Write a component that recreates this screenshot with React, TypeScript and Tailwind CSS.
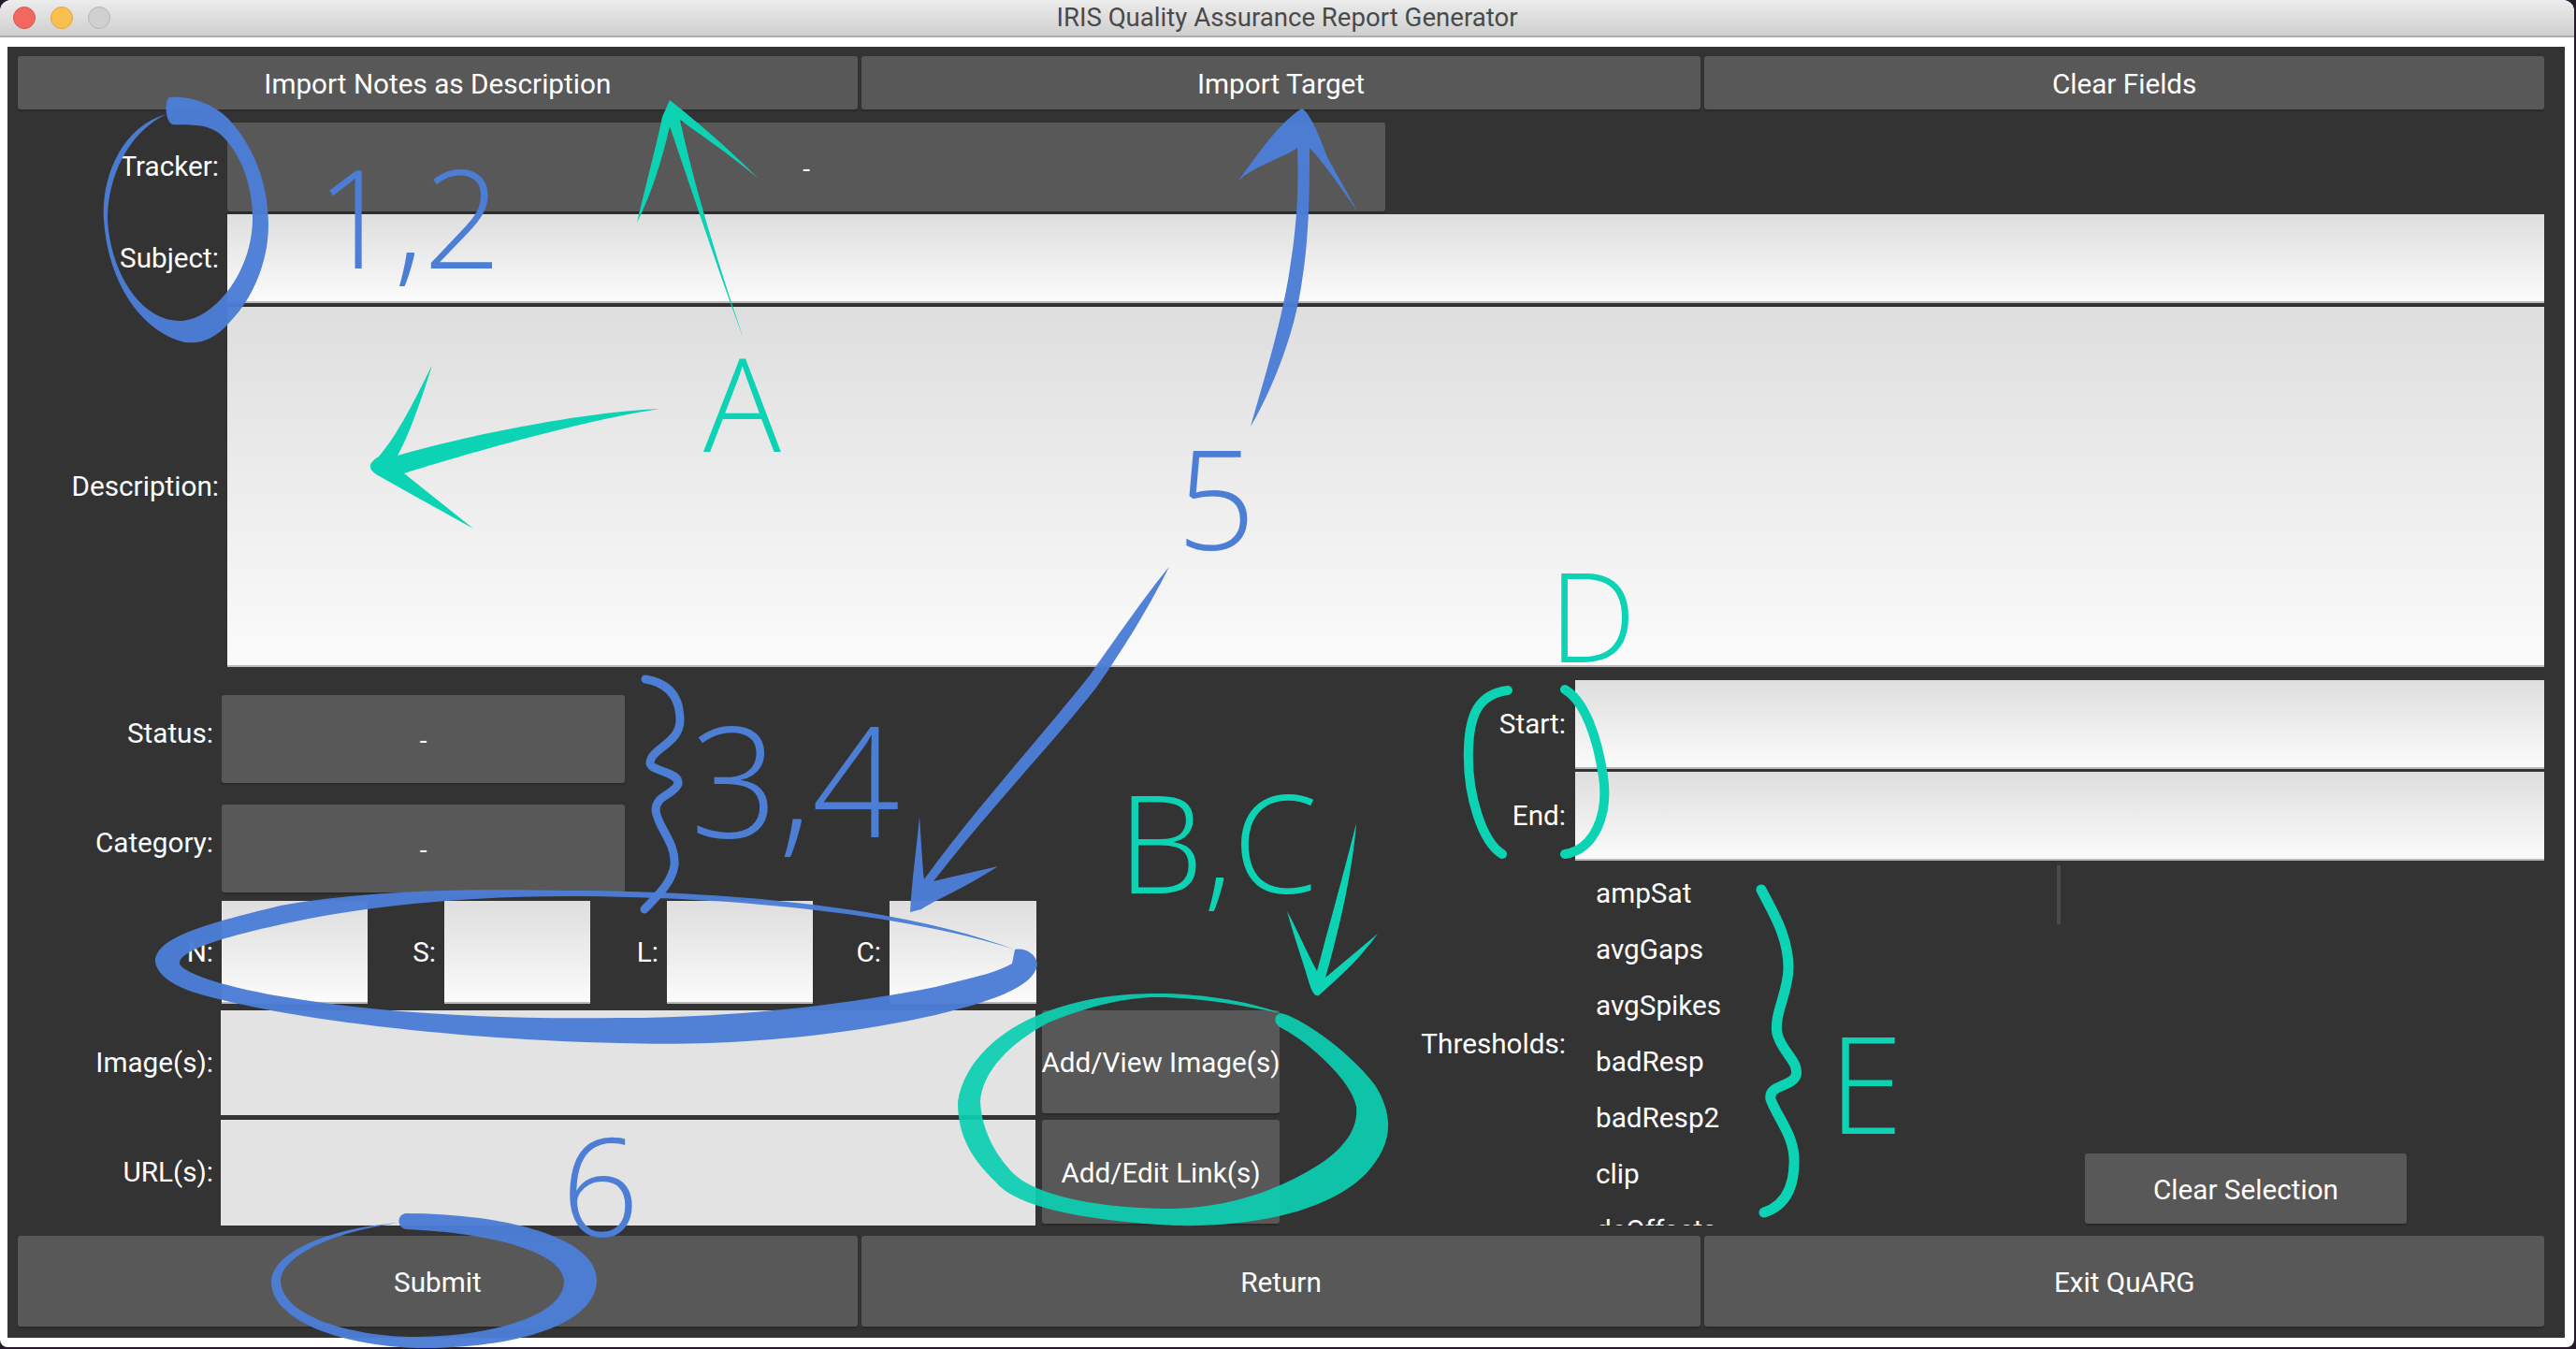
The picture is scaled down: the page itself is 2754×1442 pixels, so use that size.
import React from 'react';

const font = { fontFamily: 'Roboto, "Liberation Sans", sans-serif' };

const Button: React.FC<{ label: string; className?: string }> = ({ label, className = '' }) => (
    <button className={`bg-[#585858] rounded-[3px] shadow-[0_2px_1px_#2a2a2a] text-white text-[29.7px] pt-[3px] flex items-center justify-center whitespace-nowrap ${className}`}>
        {label}
    </button>
);

const Combo: React.FC<{ className?: string }> = ({ className = '' }) => (
    <div className={`bg-[#585858] rounded-[3px] shadow-[0_2px_1px_#2a2a2a] text-white text-[28px] flex items-center justify-center ${className}`}>
        <span className="pt-1">-</span>
    </div>
);

const Label: React.FC<{ text: string; className?: string }> = ({ text, className = '' }) => (
    <div className={`text-white text-[29.7px] text-right flex items-center justify-end shrink-0 ${className}`}>{text}</div>
);

const inputClass = 'bg-linear-to-b from-[#dedede] to-[#fbfbfb] border-b-2 border-[#b9b9b9]';

const THRESHOLDS = ['ampSat', 'avgGaps', 'avgSpikes', 'badResp', 'badResp2', 'clip', 'dcOffsets'];

// hand drawn marks laid over the finished window
const Annotations = () => (
    <svg className="absolute left-0 top-0 pointer-events-none" width={2754} height={1442} viewBox="0 0 2754 1442">
        <g fill="#4c7ed6" fillOpacity={0.97}>
            {/* ring around tracker, subject */}
            <path d="M181 104 C205 102 230 112 245 128 C270 155 287 195 287 240 C287 280 270 320 245 345 C230 362 215 368 198 366 C150 355 115 300 111 235 C108 190 130 135 178 122 C136 142 115 190 115 235 C118 290 150 345 195 343 C230 340 270 290 270 233 C270 195 255 160 235 143 C218 130 200 135 184 133 C176 128 176 108 181 104 Z" />
            {/* arrow to import target */}
            <path d="M1392 116 C1402 122 1412 150 1420 170 L1452 227 C1430 195 1412 170 1400 158 C1400 200 1400 250 1392 300 C1384 360 1358 420 1337 456 C1350 410 1372 340 1380 280 C1388 230 1388 190 1387 158 C1370 170 1345 175 1324 193 C1345 165 1368 130 1392 116 Z" />
            {/* arrow to the C field */}
            <path d="M1250 606 C1225 655 1200 695 1172 735 C1125 795 1055 868 998 942 L1067 926 C1030 950 1000 962 985 972 L973 975 C975 940 980 905 983 873 C985 900 986 925 988 940 C1040 868 1115 785 1165 722 C1198 675 1228 632 1250 606 Z" />
            {/* ring around N, S, L, C */}
            <path d="M1085 1015 C1100 1012 1112 1025 1108 1035 C1100 1060 1040 1075 1000 1085 C880 1112 760 1118 663 1115 C500 1112 300 1090 205 1060 C175 1050 165 1035 166 1025 C170 1000 230 985 300 968 C400 950 520 950 606 952 C750 952 950 965 1085 1015 C950 972 750 958 606 958 C520 958 420 965 330 982 C250 998 190 1015 192 1030 C195 1040 240 1055 300 1065 C400 1082 520 1090 663 1088 C780 1088 900 1075 1000 1055 C1040 1045 1065 1040 1082 1030 Z" />
            {/* ring around submit */}
            <path d="M434 1297 C530 1297 640 1320 638 1370 C635 1420 540 1442 446 1441 C360 1438 290 1410 290 1370 C292 1335 360 1312 427 1307 C365 1315 300 1340 300 1370 C302 1405 370 1429 446 1429 C530 1428 603 1405 603 1370 C603 1340 530 1318 434 1314 C424 1312 424 1298 434 1297 Z" />
        </g>
        <g fill="none" stroke="#4c7ed6" strokeLinecap="round" strokeLinejoin="round">
            <path strokeWidth={9} d="M690 726 C715 730 727 745 727 770 C727 795 695 800 695 816 C697 825 727 825 725 838 C720 850 701 850 701 866 C703 885 723 900 721 925 C718 945 700 960 689 972" />
        </g>
        <g fill="#0dd3b5">
            {/* arrow to import notes */}
            <path d="M716 107 C730 118 770 150 811 191 C780 165 750 145 727 128 C740 190 770 290 795 362 C775 310 745 220 716 135 C707 175 695 210 681 238 C690 200 703 150 708 125 Z" />
            {/* arrow to description */}
            <path d="M462 390 C450 430 435 470 425 487 C480 470 620 440 706 437 C620 450 500 485 432 506 L506 565 C470 545 425 520 402 507 C392 500 395 494 405 488 C425 465 445 425 462 390 Z" />
            {/* arrow to the add buttons */}
            <path d="M1450 880 C1447 920 1437 975 1417 1045 L1473 998 C1450 1030 1425 1050 1410 1064 C1405 1066 1402 1058 1400 1052 C1392 1025 1383 1000 1376 974 C1385 990 1398 1020 1408 1038 C1425 975 1440 920 1450 880 Z" />
        </g>
        <g fill="#0dcfb2" fillOpacity={0.93}>
            {/* ring around the add buttons */}
            <path d="M1369 1083 C1385 1085 1440 1120 1470 1160 C1492 1195 1488 1225 1460 1255 C1420 1295 1340 1312 1255 1310 C1160 1305 1085 1290 1064 1263 C1035 1235 1024 1210 1024 1178 C1030 1135 1070 1100 1115 1083 C1160 1065 1205 1062 1236 1062 C1290 1062 1340 1072 1369 1083 C1330 1075 1280 1066 1236 1066 C1205 1066 1165 1075 1121 1093 C1080 1115 1050 1145 1048 1178 C1050 1210 1065 1235 1083 1254 C1110 1280 1180 1292 1255 1292 C1320 1290 1370 1270 1410 1245 C1440 1225 1452 1205 1450 1183 C1445 1155 1400 1115 1372 1100 C1360 1095 1362 1085 1369 1083 Z" />
        </g>
        <g fill="none" stroke="#0dd3b5" strokeLinecap="round" strokeLinejoin="round">
            <path strokeWidth={10} d="M1612 738 C1580 742 1571 765 1570 800 C1568 850 1585 900 1606 913" />
            <path strokeWidth={10} d="M1673 737 C1695 750 1708 790 1714 830 C1720 870 1705 908 1673 913" />
            <path strokeWidth={11} d="M1883 951 C1895 975 1912 1000 1912 1035 C1912 1060 1896 1085 1900 1105 C1905 1125 1924 1135 1920 1150 C1915 1162 1890 1160 1893 1175 C1900 1195 1920 1215 1918 1245 C1917 1275 1905 1290 1886 1296" />
        </g>
        {/* scrawled letters and numbers */}
        <g fontFamily='"Open Sans", sans-serif' fontWeight={300}>
            <text x={338} y={287} fontSize={146} fill="#4c7ed6">1,2</text>
            <text x={752} y={483} fontSize={138} fill="#0dd3b5">A</text>
            <text x={1258} y={588} fontSize={148} fill="#4c7ed6">5</text>
            <text x={738} y={895} fontSize={165} fill="#4c7ed6">3,4</text>
            <text x={1195} y={955} fontSize={146} fill="#0dd3b5">B,C</text>
            <text x={1656} y={708} fontSize={132} fill="#0dd3b5">D</text>
            <text x={1955} y={1212} fontSize={144} fill="#0dd3b5">E</text>
            <text x={600} y={1322} fontSize={146} fill="#4c7ed6">6</text>
        </g>
    </svg>
);

export default function App() {
    return (
        <div className="relative w-[2754px] h-[1442px] overflow-hidden bg-[#241a2a]" style={font}>
            <div className="w-[2752px] h-[1440px] bg-white rounded-t-[12px] rounded-b-[8px] overflow-hidden">
                {/* title bar */}
                <div className="relative h-[40px] bg-linear-to-b from-[#ececec] to-[#cfcfcf] border-b-2 border-[#adadad] flex items-center pl-[14px] gap-4">
                    <div className="w-6 h-6 rounded-full bg-[#f2685f] border border-[#d9574f]" />
                    <div className="w-6 h-6 rounded-full bg-[#f9c04f] border border-[#dfa53c]" />
                    <div className="w-6 h-6 rounded-full bg-[#d0d0d0] border border-[#b5b5b5]" />
                    <div className="absolute inset-x-0 top-0 h-[38px] flex items-center justify-center text-[27.6px] text-[#4a4a4a]">
                        IRIS Quality Assurance Report Generator
                    </div>
                </div>

                {/* main panel */}
                <div className="mt-[10px] ml-2 w-[2734px] h-[1380px] bg-[#333333] pl-[11px] pr-[22px] pt-[10px] flex flex-col">
                    <div className="grid grid-cols-3 gap-1 h-[57px]">
                        <Button label="Import Notes as Description" />
                        <Button label="Import Target" />
                        <Button label="Clear Fields" />
                    </div>

                    <div className="mt-[14px] flex h-[95px] gap-[9px]">
                        <Label text="Tracker:" className="w-[215px]" />
                        <Combo className="w-[1238px]" />
                    </div>
                    <div className="mt-[3px] flex h-[95px] gap-[9px]">
                        <Label text="Subject:" className="w-[215px]" />
                        <div className={`flex-1 ${inputClass}`} />
                    </div>
                    <div className="mt-[4px] flex h-[385px] gap-[9px]">
                        <Label text="Description:" className="w-[215px]" />
                        <div className={`flex-1 ${inputClass}`} />
                    </div>

                    <div className="mt-[14px] flex h-[583px]">
                        {/* left column */}
                        <div className="w-[1349px] pt-[16px] flex flex-col">
                            <div className="flex h-[94px] gap-[9px]">
                                <Label text="Status:" className="w-[209px] pb-[12px]" />
                                <Combo className="w-[431px]" />
                            </div>
                            <div className="mt-[23px] flex h-[94px] gap-[9px]">
                                <Label text="Category:" className="w-[209px] pb-[12px]" />
                                <Combo className="w-[431px]" />
                            </div>
                            <div className="mt-[9px] flex h-[110px]">
                                <div className="flex gap-[9px]">
                                    <Label text="N:" className="w-[209px]" />
                                    <div className={`w-[156px] ${inputClass}`} />
                                </div>
                                <div className="flex gap-[9px]">
                                    <Label text="S:" className="w-[73px]" />
                                    <div className={`w-[156px] ${inputClass}`} />
                                </div>
                                <div className="flex gap-[9px]">
                                    <Label text="L:" className="w-[73px]" />
                                    <div className={`w-[156px] ${inputClass}`} />
                                </div>
                                <div className="flex gap-[9px]">
                                    <Label text="C:" className="w-[73px]" />
                                    <div className={`w-[157px] ${inputClass}`} />
                                </div>
                            </div>
                            <div className="mt-[7px] flex h-[112px]">
                                <Label text="Image(s):" className="w-[209px]" />
                                <div className="ml-2 w-[871px] bg-[#e3e3e3]" />
                                <Button label="Add/View Image(s)" className="ml-[7px] w-[254px] h-[110px]" />
                            </div>
                            <div className="mt-[5px] flex h-[113px]">
                                <Label text="URL(s):" className="w-[209px]" />
                                <div className="ml-2 w-[871px] bg-[#e3e3e3]" />
                                <Button label="Add/Edit Link(s)" className="ml-[7px] w-[254px] h-[111px]" />
                            </div>
                        </div>

                        {/* right column */}
                        <div className="flex-1 flex flex-col">
                            <div className="flex h-[95px] gap-[10px]">
                                <Label text="Start:" className="w-[306px]" />
                                <div className={`flex-1 ${inputClass}`} />
                            </div>
                            <div className="mt-[3px] flex h-[95px] gap-[10px]">
                                <Label text="End:" className="w-[306px]" />
                                <div className={`flex-1 ${inputClass}`} />
                            </div>
                            <div className="flex h-[390px] gap-[10px]">
                                <Label text="Thresholds:" className="w-[306px] pt-[2px]" />
                                <div className="relative mt-[5px] w-[519px] overflow-hidden pl-[22px]">
                                    {THRESHOLDS.map(name => (
                                        <div key={name} className="h-[60px] flex items-center text-white text-[29.7px]">{name}</div>
                                    ))}
                                    <div className="absolute right-0 top-0 w-1 h-[63px] bg-[#4a4a4a]" />
                                </div>
                                <div className="ml-4 flex flex-col justify-end pb-[2px]">
                                    <Button label="Clear Selection" className="w-[344px] h-[75px]" />
                                </div>
                            </div>
                        </div>
                    </div>

                    <div className="mt-[11px] grid grid-cols-3 gap-1 h-[97px]">
                        <Button label="Submit" />
                        <Button label="Return" />
                        <Button label="Exit QuARG" />
                    </div>
                </div>
            </div>
            <Annotations />
        </div>
    );
}
